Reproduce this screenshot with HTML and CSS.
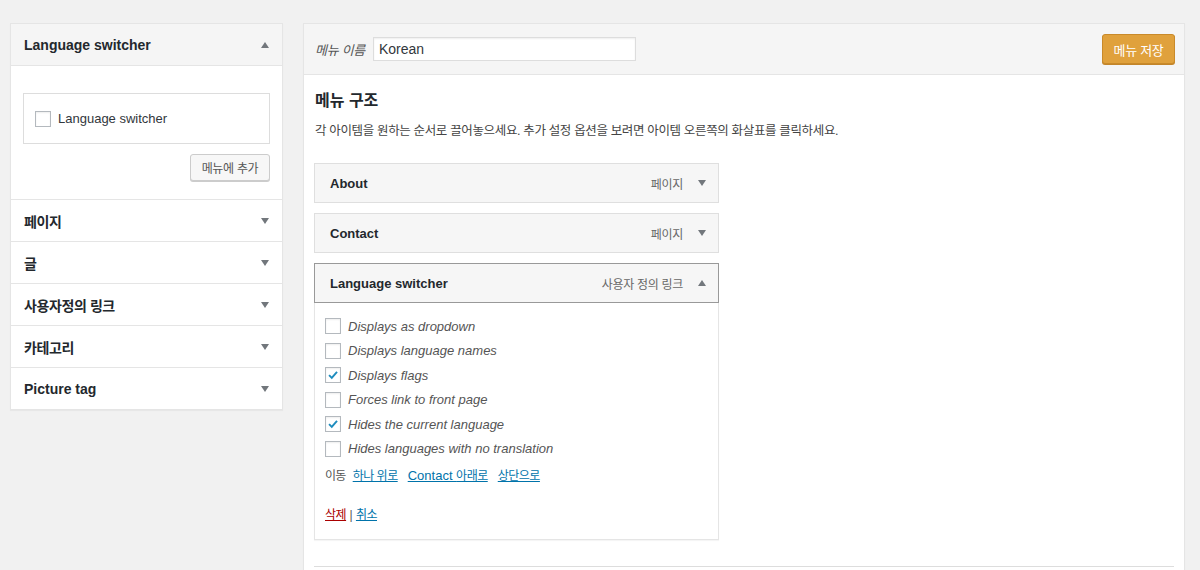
FILE: index.html
```html
<!DOCTYPE html>
<html lang="ko">
<head>
<meta charset="utf-8">
<link rel="stylesheet" href="styles.css">
</head>
<body>
<div class="wrap">
  <div class="sidebar">
    <div class="acc open">
      <div class="acc-head"><span>Language switcher</span><span class="tri up"></span></div>
      <div class="acc-body">
        <div class="item-box">
          <label class="chk-row"><span class="cb"></span><span>Language switcher</span></label>
        </div>
        <div class="btn-row"><button class="btn">메뉴에 추가</button></div>
      </div>
    </div>
    <div class="acc"><div class="acc-head"><span class="ko">페이지</span><span class="tri"></span></div></div>
    <div class="acc"><div class="acc-head"><span class="ko">글</span><span class="tri"></span></div></div>
    <div class="acc"><div class="acc-head"><span class="ko">사용자정의 링크</span><span class="tri"></span></div></div>
    <div class="acc"><div class="acc-head"><span class="ko">카테고리</span><span class="tri"></span></div></div>
    <div class="acc"><div class="acc-head"><span>Picture tag</span><span class="tri"></span></div></div>
  </div>

  <div class="main">
    <div class="main-head">
      <label class="name-label">메뉴 이름</label>
      <input class="name-input" type="text" value="Korean">
      <button class="btn-primary">메뉴 저장</button>
    </div>
    <div class="main-body">
      <h3 class="title">메뉴 구조</h3>
      <p class="desc">각 아이템을 원하는 순서로 끌어놓으세요. 추가 설정 옵션을 보려면 아이템 오른쪽의 화살표를 클릭하세요.</p>
      <div class="menu-item">
        <div class="mi-head"><span class="mi-title">About</span><span class="mi-type">페이지</span><span class="tri"></span></div>
      </div>
      <div class="menu-item">
        <div class="mi-head"><span class="mi-title">Contact</span><span class="mi-type">페이지</span><span class="tri"></span></div>
      </div>
      <div class="menu-item active">
        <div class="mi-head"><span class="mi-title">Language switcher</span><span class="mi-type">사용자 정의 링크</span><span class="tri up"></span></div>
        <div class="mi-settings">
          <label class="opt"><span class="cb"></span><span>Displays as dropdown</span></label>
          <label class="opt"><span class="cb"></span><span>Displays language names</span></label>
          <label class="opt"><span class="cb checked"><svg viewBox="0 0 16 16" width="16" height="16"><path d="M3.5 8.2 L6.6 11.3 L12.6 4.3" fill="none" stroke="#1e8cbe" stroke-width="2.2"/></svg></span><span>Displays flags</span></label>
          <label class="opt"><span class="cb"></span><span>Forces link to front page</span></label>
          <label class="opt"><span class="cb checked"><svg viewBox="0 0 16 16" width="16" height="16"><path d="M3.5 8.2 L6.6 11.3 L12.6 4.3" fill="none" stroke="#1e8cbe" stroke-width="2.2"/></svg></span><span>Hides the current language</span></label>
          <label class="opt"><span class="cb"></span><span>Hides languages with no translation</span></label>
          <div class="move"><span class="move-label ko">이동</span><a href="#" class="ko">하나 위로</a><a href="#">Contact <span class="ko">아래로</span></a><a href="#" class="ko">상단으로</a></div>
          <div class="actions"><a href="#" class="del ko">삭제</a> <span class="sep">|</span> <a href="#" class="ko">취소</a></div>
        </div>
      </div>
      <div class="main-foot"></div>
    </div>
  </div>
</div>
</body>
</html>
```

FILE: styles.css
```css
* { box-sizing: border-box; }
html, body { margin: 0; padding: 0; }
body {
  background: #f1f1f1;
  font-family: "Liberation Sans", "Noto Sans CJK KR", Arial, sans-serif;
  font-size: 13px;
  color: #444;
  height: 570px;
  overflow: hidden;
}
.wrap {
  display: flex;
  align-items: flex-start;
  padding: 23px 0 0 10px;
  gap: 20px;
}
.ko { letter-spacing: -0.4px; }

/* sidebar */
.sidebar {
  width: 273px;
  background: #fff;
  border: 1px solid #e5e5e5;
  box-shadow: 0 1px 1px rgba(0,0,0,.04);
}
.acc + .acc { border-top: 1px solid #e5e5e5; }
.acc-head {
  height: 41px;
  display: flex;
  align-items: center;
  justify-content: space-between;
  padding: 0 13px 0 13px;
  font-size: 14px;
  font-weight: bold;
  color: #23282d;
}
.acc.open .acc-head {
  height: 42px;
  background: #f5f5f5;
  border-bottom: 1px solid #e5e5e5;
}
.tri {
  width: 0; height: 0;
  border-left: 4px solid transparent;
  border-right: 4px solid transparent;
  border-top: 6px solid #72777c;
}
.tri.up { border-top: 0; border-bottom: 6px solid #72777c; }
.acc-body { padding: 27px 12px 18px 12px; }
.item-box {
  border: 1px solid #ddd;
  height: 51px;
  display: flex;
  align-items: center;
  padding: 0 11px;
}
.chk-row { display: flex; align-items: center; gap: 7px; color: #32373c; font-size: 13px; }
.cb {
  width: 16px; height: 16px;
  border: 1px solid #b4b9be;
  background: #fff;
  box-shadow: inset 0 1px 2px rgba(0,0,0,.07);
  display: inline-flex;
  align-items: center;
  justify-content: center;
  flex: none;
}
.cb svg { display: block; }
.btn-row { display: flex; justify-content: flex-end; margin-top: 10px; }
.btn {
  font-family: inherit;
  font-size: 12px;
  letter-spacing: -0.3px;
  color: #555;
  background: #f7f7f7;
  border: 1px solid #ccc;
  border-radius: 3px;
  box-shadow: 0 1px 0 #ccc;
  height: 27px;
  width: 80px;
  padding: 0;
}

/* main */
.main {
  width: 882px;
  background: #fff;
  border: 1px solid #e5e5e5;
  box-shadow: 0 1px 1px rgba(0,0,0,.04);
}
.main-head {
  background: #f5f5f5;
  border-bottom: 1px solid #e5e5e5;
  height: 51px;
  display: flex;
  align-items: center;
  padding: 0 9px 0 11px;
}
.name-label { font-style: italic; color: #555; font-size: 13px; width: 58px; letter-spacing: -0.3px; }
.name-input {
  width: 263px;
  height: 24px;
  border: 1px solid #ddd;
  box-shadow: inset 0 1px 2px rgba(0,0,0,.07);
  font-family: inherit;
  font-size: 14px;
  color: #32373c;
  padding: 0 5px;
  outline: none;
}
.btn-primary {
  margin-left: auto;
  width: 73px;
  height: 30px;
  background: #e0a13c;
  border: 1px solid #c98a2a;
  border-radius: 3px;
  box-shadow: 0 1px 0 #c3852a;
  color: #fff;
  font-family: inherit;
  font-size: 13px;
  letter-spacing: -0.3px;
  padding: 0;
}
.main-body { padding: 15px 10px 0 10px; }
.title {
  margin: 0 0 0 1px;
  font-size: 16px;
  line-height: 22px;
  font-weight: bold;
  color: #23282d;
}
.desc { margin: 9px 0 0 1px; line-height: 20px; font-size: 12.5px; letter-spacing: -0.35px; color: #444; }
.menu-item { width: 405px; margin-top: 10px; }
.desc + .menu-item { margin-top: 22px; }
.mi-head {
  height: 40px;
  background: #f6f6f6;
  border: 1px solid #dfdfdf;
  display: flex;
  align-items: center;
  padding: 0 12px 0 15px;
}
.mi-title { font-weight: bold; font-size: 13px; color: #23282d; flex: 1; }
.mi-type { font-size: 12px; color: #666; margin-right: 15px; letter-spacing: -0.3px; }
.menu-item.active .mi-head { border-color: #999; }
.mi-settings {
  border: 1px solid #e5e5e5;
  border-top: 0;
  padding: 11px 10px 14px 10px;
  box-shadow: 0 1px 1px rgba(0,0,0,.04);
}
.opt {
  display: flex;
  align-items: center;
  gap: 7px;
  height: 24.5px;
  font-style: italic;
  color: #555;
  font-size: 13px;
}
.move { margin-top: 5px; display: flex; gap: 10px; line-height: 20px; }
.move-label { margin-right: -3px; }
.move a .ko, .move a.ko { font-size: 12px; letter-spacing: -0.5px; }
.move-label { color: #555; font-size: 12px; letter-spacing: -0.7px; }
a { color: #0073aa; text-decoration: underline; }
.actions { margin-top: 19px; line-height: 20px; font-size: 12px; }
.actions .ko { letter-spacing: -0.5px; }
.actions .del { color: #a00; }
.sep { color: #555; }
.main-foot { border-top: 1px solid #ddd; margin-top: 26px; height: 10px; }
```
